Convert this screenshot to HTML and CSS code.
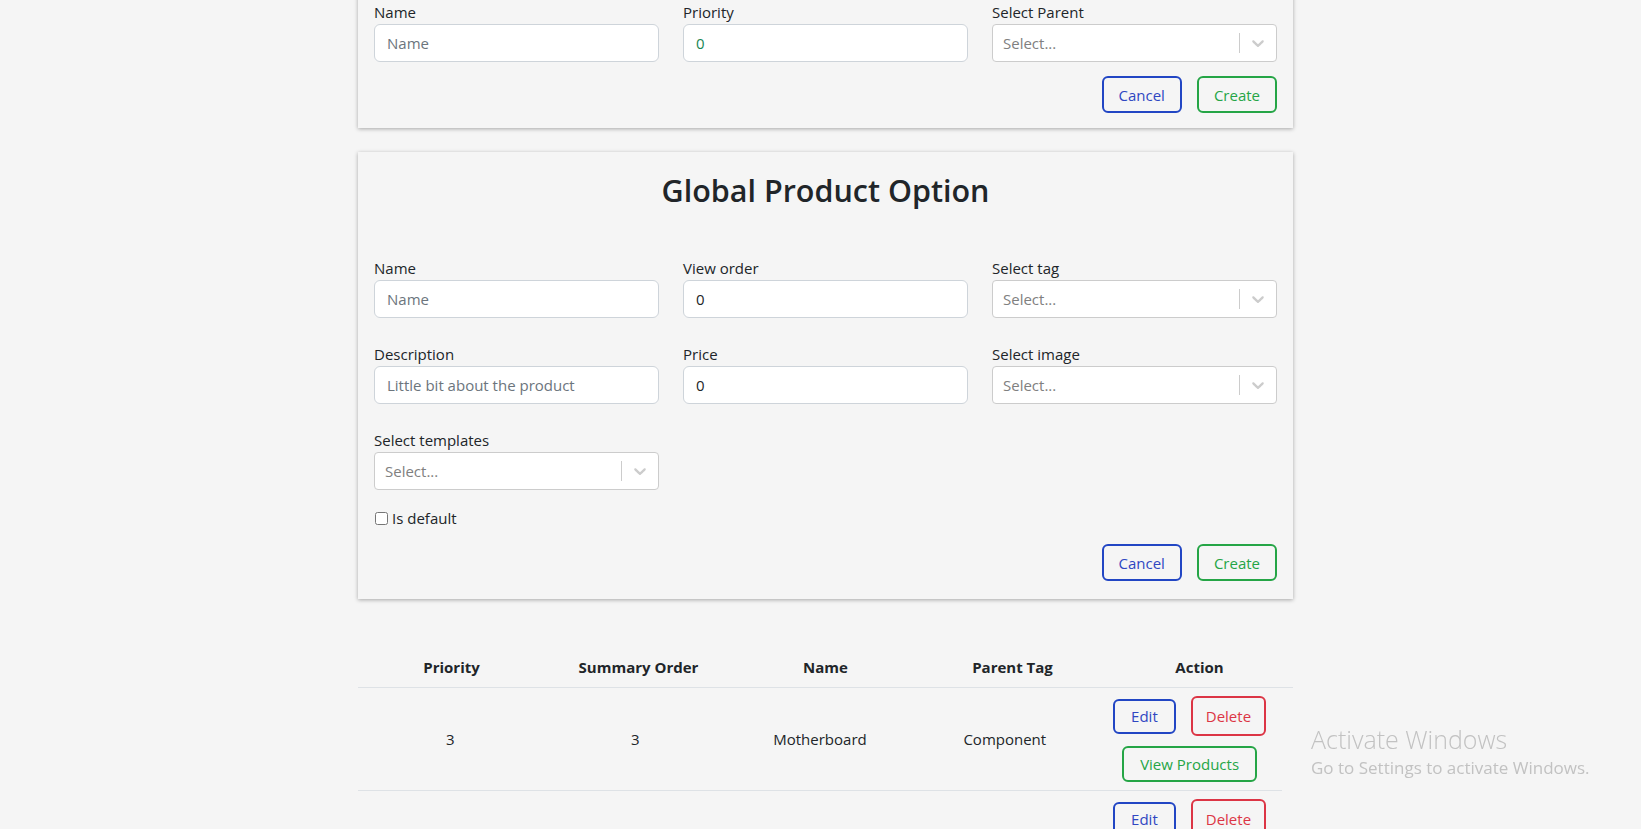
FILE: index.html
```html
<!DOCTYPE html>
<html lang="en">
<head>
<meta charset="utf-8">
<title>Global Product Option</title>
<link rel="stylesheet" href="styles.css">
</head>
<body>
<div class="page">
  <main class="container">
    <section class="card card-first">
      <div class="form-grid">
        <div class="field">
          <label class="form-label">Name</label>
          <input class="form-control" type="text" placeholder="Name">
        </div>
        <div class="field">
          <label class="form-label">Priority</label>
          <input class="form-control text-success" type="text" value="0">
        </div>
        <div class="field">
          <label class="form-label">Select Parent</label>
          <div class="select">
            <span class="select-placeholder">Select...</span>
            <span class="select-sep"></span>
            <span class="select-arrow"><svg viewBox="0 0 20 20" width="20" height="20"><path d="M4.516 7.548c0.436-0.446 1.043-0.481 1.576 0l3.908 3.747 3.908-3.747c0.533-0.481 1.141-0.446 1.574 0 0.436 0.445 0.408 1.197 0 1.615-0.406 0.418-4.695 4.502-4.695 4.502-0.217 0.223-0.502 0.335-0.787 0.335s-0.57-0.112-0.789-0.335c0 0-4.287-4.084-4.695-4.502s-0.436-1.17 0-1.615z"/></svg></span>
          </div>
        </div>
      </div>
      <div class="actions">
        <button class="btn btn-blue">Cancel</button>
        <button class="btn btn-green">Create</button>
      </div>
    </section>

    <section class="card">
      <h2 class="card-title">Global Product Option</h2>
      <div class="form-grid">
        <div class="field">
          <label class="form-label">Name</label>
          <input class="form-control" type="text" placeholder="Name">
        </div>
        <div class="field">
          <label class="form-label">View order</label>
          <input class="form-control" type="text" value="0">
        </div>
        <div class="field">
          <label class="form-label">Select tag</label>
          <div class="select">
            <span class="select-placeholder">Select...</span>
            <span class="select-sep"></span>
            <span class="select-arrow"><svg viewBox="0 0 20 20" width="20" height="20"><path d="M4.516 7.548c0.436-0.446 1.043-0.481 1.576 0l3.908 3.747 3.908-3.747c0.533-0.481 1.141-0.446 1.574 0 0.436 0.445 0.408 1.197 0 1.615-0.406 0.418-4.695 4.502-4.695 4.502-0.217 0.223-0.502 0.335-0.787 0.335s-0.57-0.112-0.789-0.335c0 0-4.287-4.084-4.695-4.502s-0.436-1.17 0-1.615z"/></svg></span>
          </div>
        </div>
        <div class="field">
          <label class="form-label">Description</label>
          <input class="form-control" type="text" placeholder="Little bit about the product">
        </div>
        <div class="field">
          <label class="form-label">Price</label>
          <input class="form-control" type="text" value="0">
        </div>
        <div class="field">
          <label class="form-label">Select image</label>
          <div class="select">
            <span class="select-placeholder">Select...</span>
            <span class="select-sep"></span>
            <span class="select-arrow"><svg viewBox="0 0 20 20" width="20" height="20"><path d="M4.516 7.548c0.436-0.446 1.043-0.481 1.576 0l3.908 3.747 3.908-3.747c0.533-0.481 1.141-0.446 1.574 0 0.436 0.445 0.408 1.197 0 1.615-0.406 0.418-4.695 4.502-4.695 4.502-0.217 0.223-0.502 0.335-0.787 0.335s-0.57-0.112-0.789-0.335c0 0-4.287-4.084-4.695-4.502s-0.436-1.17 0-1.615z"/></svg></span>
          </div>
        </div>
        <div class="field">
          <label class="form-label">Select templates</label>
          <div class="select">
            <span class="select-placeholder">Select...</span>
            <span class="select-sep"></span>
            <span class="select-arrow"><svg viewBox="0 0 20 20" width="20" height="20"><path d="M4.516 7.548c0.436-0.446 1.043-0.481 1.576 0l3.908 3.747 3.908-3.747c0.533-0.481 1.141-0.446 1.574 0 0.436 0.445 0.408 1.197 0 1.615-0.406 0.418-4.695 4.502-4.695 4.502-0.217 0.223-0.502 0.335-0.787 0.335s-0.57-0.112-0.789-0.335c0 0-4.287-4.084-4.695-4.502s-0.436-1.17 0-1.615z"/></svg></span>
          </div>
        </div>
      </div>
      <label class="check"><input type="checkbox" class="check-input">Is default</label>
      <div class="actions">
        <button class="btn btn-blue">Cancel</button>
        <button class="btn btn-green">Create</button>
      </div>
    </section>

    <div class="table">
      <div class="table-head">
        <div class="th">Priority</div>
        <div class="th">Summary Order</div>
        <div class="th">Name</div>
        <div class="th">Parent Tag</div>
        <div class="th">Action</div>
      </div>
      <div class="table-row">
        <div class="td">3</div>
        <div class="td">3</div>
        <div class="td">Motherboard</div>
        <div class="td">Component</div>
        <div class="td td-actions">
          <div class="action-line">
            <button class="btn btn-blue btn-edit">Edit</button>
            <button class="btn btn-red btn-delete">Delete</button>
          </div>
          <button class="btn btn-green btn-view">View Products</button>
        </div>
      </div>
      <div class="table-row">
        <div class="td"></div>
        <div class="td"></div>
        <div class="td"></div>
        <div class="td"></div>
        <div class="td td-actions">
          <div class="action-line">
            <button class="btn btn-blue btn-edit">Edit</button>
            <button class="btn btn-red btn-delete">Delete</button>
          </div>
        </div>
      </div>
    </div>
  </main>

  <div class="watermark">
    <div class="watermark-title">Activate Windows</div>
    <div class="watermark-sub">Go to Settings to activate Windows.</div>
  </div>
</div>
</body>
</html>
```

FILE: styles.css
```css
html, body {
  margin: 0;
  padding: 0;
  overflow: hidden;
}

body {
  background: #f5f5f5;
  color: #212529;
  font-family: "Open Sans", "Noto Sans", sans-serif;
  font-size: 15px;
  line-height: 24px;
}

.page {
  display: flex;
  justify-content: center;
  padding-left: 10px;
}

.container {
  width: 935px;
  margin-top: -16px;
}

.card {
  background: #f5f5f5;
  box-shadow: 0 1px 4px rgba(0, 0, 0, 0.32);
  padding: 19px 16px 18px;
  margin-bottom: 24px;
}

.card-first {
  padding-top: 16px;
  padding-bottom: 15px;
}

.card-title {
  margin: 0 0 47px;
  text-align: center;
  font-size: 30.5px;
  line-height: 38px;
  font-weight: 600;
  color: #212529;
}

.form-grid {
  display: grid;
  grid-template-columns: repeat(3, 1fr);
  column-gap: 24px;
  row-gap: 24px;
}

.field {
  display: flex;
  flex-direction: column;
}

.form-label {
  display: block;
  line-height: 24px;
}

.form-control {
  display: block;
  box-sizing: border-box;
  width: 100%;
  height: 38px;
  padding: 6px 12px;
  border: 1px solid #ced4da;
  border-radius: 6px;
  background: #fff;
  font-family: inherit;
  font-size: 15px;
  color: #212529;
  outline: none;
}

.form-control::placeholder {
  color: #6c757d;
}

.text-success {
  color: #198754;
}

.select {
  display: flex;
  align-items: center;
  box-sizing: border-box;
  height: 38px;
  border: 1px solid #ccc;
  border-radius: 4px;
  background: #fff;
}

.select-placeholder {
  flex: 1;
  padding: 0 8px;
  margin-left: 2px;
  color: #808080;
}

.select-sep {
  align-self: stretch;
  width: 1px;
  margin: 8px 0;
  background: #ccc;
}

.select-arrow {
  display: flex;
  padding: 8px;
  fill: #ccc;
}

.check {
  display: flex;
  align-items: center;
  margin-top: 16px;
  line-height: 24px;
}

.check-input {
  width: 13px;
  height: 13px;
  margin: 0 4px 0 1px;
}

.actions {
  display: flex;
  justify-content: flex-end;
  gap: 15px;
  margin-top: 14px;
}

.btn {
  box-sizing: border-box;
  height: 37px;
  padding: 0 15px;
  border: 2px solid;
  border-radius: 6px;
  background: transparent;
  font-family: inherit;
  font-size: 15px;
  line-height: 24px;
  cursor: pointer;
}

.btn-blue {
  border-color: #2246c4;
  color: #2f47c2;
}

.btn-green {
  border-color: #25a546;
  color: #25a546;
}

.btn-red {
  border-color: #dc3545;
  color: #dc3545;
}

.table {
  margin-top: 48px;
}

.table-head {
  display: grid;
  grid-template-columns: repeat(5, 1fr);
  border-bottom: 1px solid #dee2e6;
}

.th {
  padding: 8px;
  text-align: center;
  font-weight: 700;
}

.table-row {
  display: grid;
  grid-template-columns: repeat(5, 1fr);
  width: 924px;
  border-bottom: 1px solid #dee2e6;
}

.td {
  display: flex;
  align-items: center;
  justify-content: center;
  padding: 8px;
}

.td-actions {
  flex-direction: column;
  gap: 10px;
}

.action-line {
  display: flex;
  align-items: center;
  gap: 15px;
}

.btn-edit {
  height: 35px;
  padding: 0 16px;
}

.btn-delete {
  height: 40px;
  padding: 0 13px;
}

.btn-view {
  height: 36px;
  padding: 0 16px;
}

.watermark {
  position: fixed;
  left: 1311px;
  top: 724px;
  color: #c2c2c2;
  pointer-events: none;
}

.watermark-title {
  font-size: 25px;
  font-weight: 300;
  line-height: 30px;
}

.watermark-sub {
  font-size: 17px;
  font-weight: 400;
  line-height: 24px;
  margin-top: 2px;
}
```
